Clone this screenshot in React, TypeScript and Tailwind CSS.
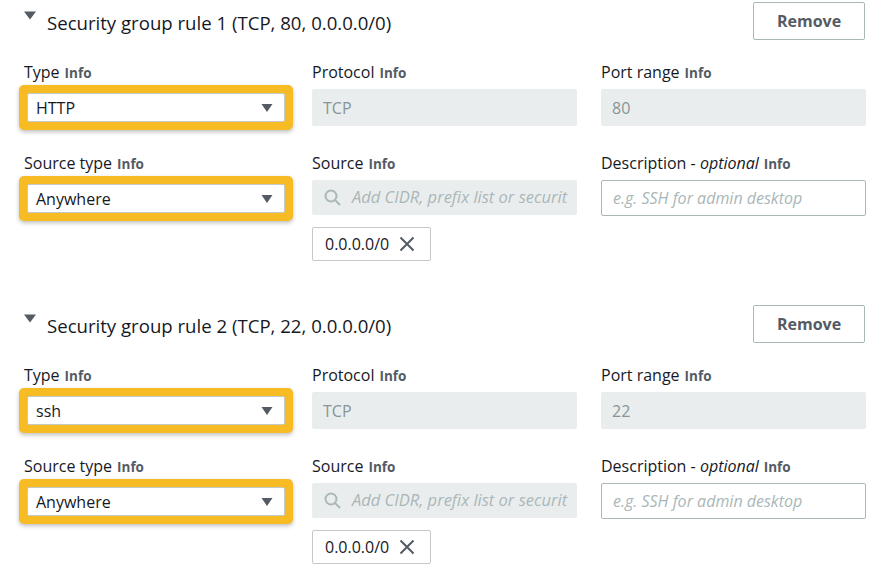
import React from "react";

const font = { fontFamily: "'Open Sans', 'Noto Sans', Arial, sans-serif" };

const Label = ({ text, optional }: { text: string; optional?: boolean }) => (
    <div className="h-[22px] text-[16px] leading-[22px] text-[#16191f] whitespace-nowrap">
        {text}
        {optional && <> - <span className="italic">optional</span></>}
        <span className="ml-[5px] text-[13.5px] font-bold text-[#545b64]">Info</span>
    </div>
)

const Caret = () => (
    <svg width="12" height="10" viewBox="0 0 12 10" className="shrink-0">
        <path d="M0.5 1 L11.5 1 L6 9 Z" fill="#545b64" />
    </svg>
)

const HighlightSelect = ({ value }: { value: string }) => (
    <div className="mt-[2px] -mx-[5px] rounded-[5px] bg-[#f7bb24] p-[8px] shadow-[0_2px_4px_rgba(0,0,0,0.25)]">
        <div className="h-[29px] bg-white border border-[#c5c8c8] rounded-[2px] flex items-center justify-between pl-[8px] pr-[11px] text-[16px] text-[#16191f]">
            <span>{value}</span>
            <Caret />
        </div>
    </div>
)

const DisabledInput = ({ value }: { value: string }) => (
    <div className="mt-[6px] h-[37px] bg-[#eaeded] rounded-[2px] flex items-center px-[11px] text-[16px] text-[#879596]">
        {value}
    </div>
)

const SourceInput = () => (
    <div className="mt-[6px] h-[35px] bg-[#eaeded] rounded-[2px] flex items-center px-[12px] gap-[11px] overflow-hidden whitespace-nowrap">
        <svg width="17" height="17" viewBox="0 0 17 17" className="shrink-0">
            <circle cx="7" cy="7" r="5.5" fill="none" stroke="#aab7b8" strokeWidth="2" />
            <path d="M11 11 L15.5 15.5" stroke="#aab7b8" strokeWidth="2" strokeLinecap="round" />
        </svg>
        <span className="italic text-[16.5px] text-[#aab7b8]">Add CIDR, prefix list or securit</span>
    </div>
)

const Chip = () => (
    <div className="mt-[12px] w-[119px] h-[34px] border border-[#c5c8c8] rounded-[2px] flex items-center gap-[10px] pl-[12px] text-[16px] text-[#16191f]">
        <span>0.0.0.0/0</span>
        <svg width="16" height="16" viewBox="0 0 16 16">
            <path d="M1.5 1.5 L14.5 14.5 M14.5 1.5 L1.5 14.5" stroke="#545b64" strokeWidth="2" />
        </svg>
    </div>
)

interface RuleProps {
    index: number
    port: string
    type: string
}

const Rule: React.FC<RuleProps> = ({ index, port, type }) => (
    <div className="h-[303px]">
        <div className="flex items-start justify-between pt-[2px]">
            <div className="flex items-start gap-[11px] pt-[8px]">
                <svg width="12" height="9" viewBox="0 0 12 9" className="mt-[1px]">
                    <path d="M0 0.5 L12 0.5 L6 8.5 Z" fill="#545b64" />
                </svg>
                <div className="text-[18.6px] leading-[26px] text-[#16191f]">
                    Security group rule {index} (TCP, {port}, 0.0.0.0/0)
                </div>
            </div>
            <button className="w-[112px] h-[38px] border border-[#aab7b8] rounded-[2px] bg-white text-[16px] font-bold text-[#545b64]">
                Remove
            </button>
        </div>
        <div className="grid grid-cols-[264px_265px_265px] gap-x-[24px] mt-[21px]">
            <div>
                <Label text="Type" />
                <HighlightSelect value={type} />
            </div>
            <div>
                <Label text="Protocol" />
                <DisabledInput value="TCP" />
            </div>
            <div>
                <Label text="Port range" />
                <DisabledInput value={port} />
            </div>
            <div className="mt-[22px]">
                <Label text="Source type" />
                <HighlightSelect value="Anywhere" />
            </div>
            <div className="mt-[22px]">
                <Label text="Source" />
                <SourceInput />
                <Chip />
            </div>
            <div className="mt-[22px]">
                <Label text="Description" optional />
                <div className="mt-[6px] h-[36px] bg-white border border-[#aab7b8] rounded-[2px] flex items-center px-[11px] italic text-[16px] text-[#aab7b8]">
                    e.g. SSH for admin desktop
                </div>
            </div>
        </div>
    </div>
)

export default function App() {
    return (
        <div style={font} className="w-[890px] h-[576px] bg-white pl-[24px] pr-[25px] overflow-hidden">
            <Rule index={1} port="80" type="HTTP" />
            <Rule index={2} port="22" type="ssh" />
        </div>
    )
}
